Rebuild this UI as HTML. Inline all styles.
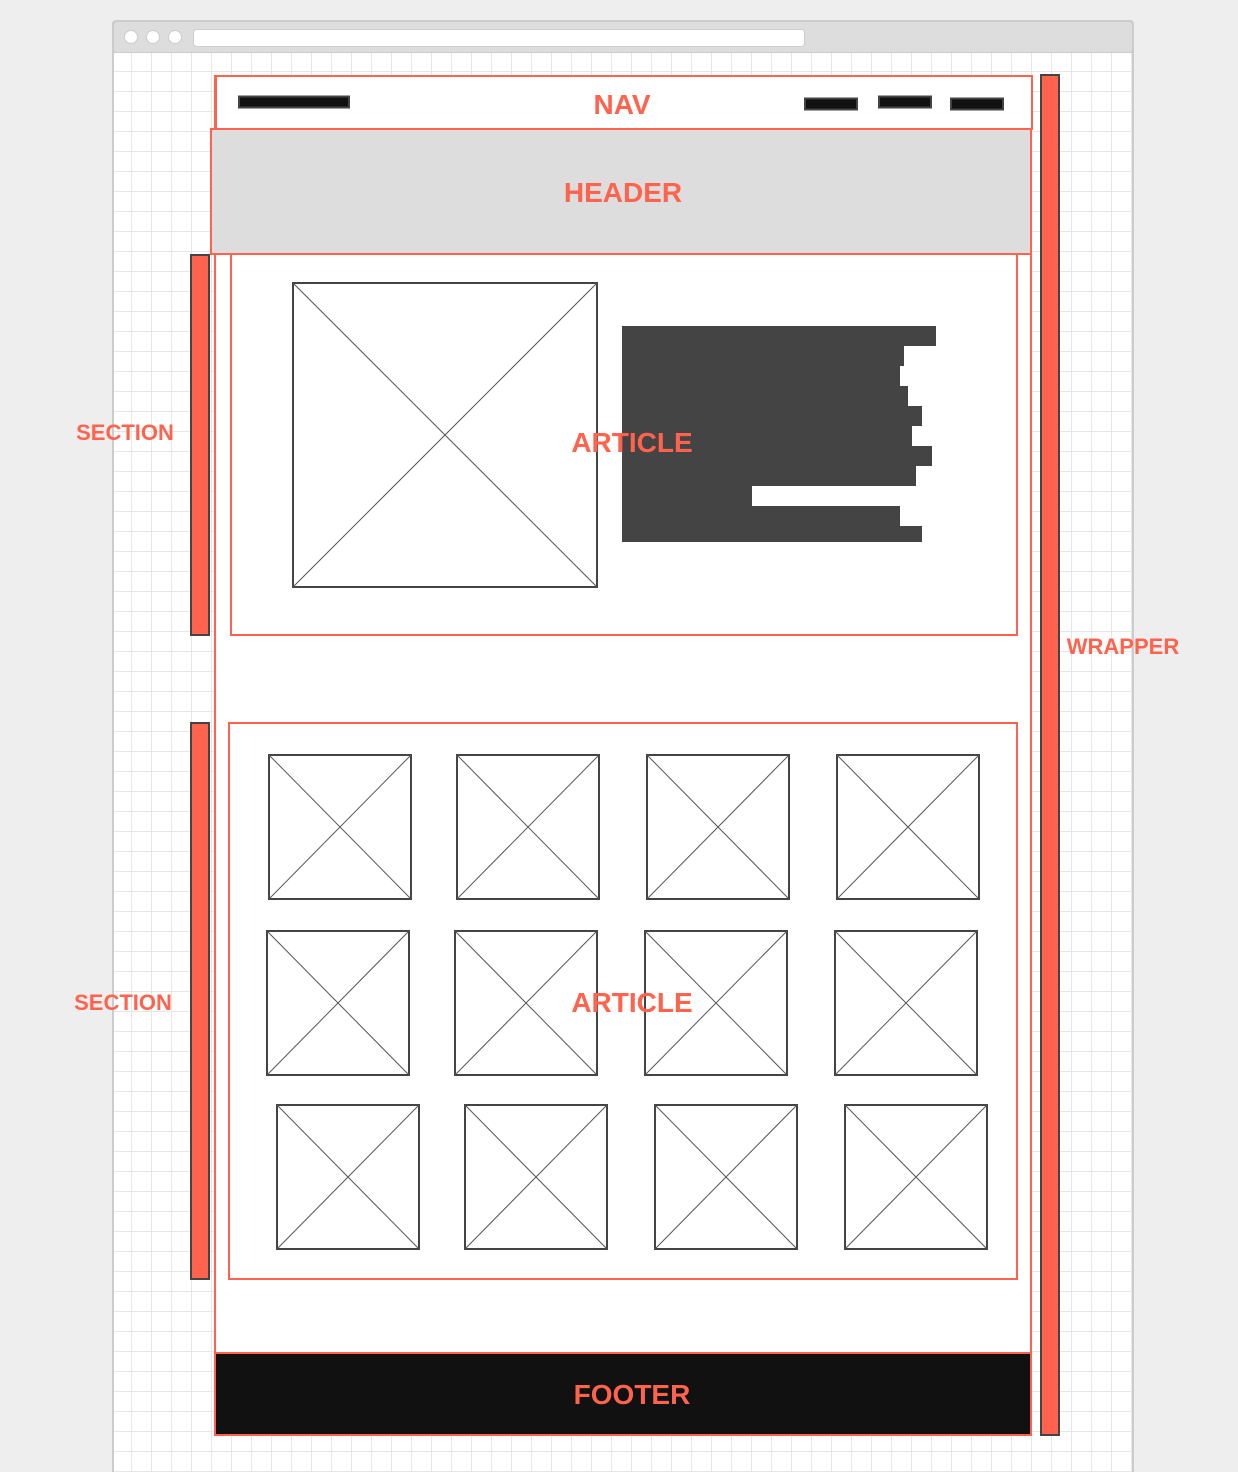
<!DOCTYPE html>
<html><head><meta charset="utf-8"><style>
html,body{margin:0;padding:0;background:#eeeeee;}
svg{display:block}
text{font-family:"Liberation Sans",Arial,sans-serif;font-weight:bold;fill:#ff634d}
</style></head><body>
<svg width="1238" height="1472" viewBox="0 0 1238 1472" xmlns="http://www.w3.org/2000/svg">
<defs>
<pattern id="g" x="11" y="11" width="20" height="20" patternUnits="userSpaceOnUse">
<path d="M0 0.5H20M0.5 0V20" stroke="#e6e6e6" stroke-width="1" fill="none"/>
</pattern>
</defs>
<rect width="1238" height="1472" fill="#eeeeee"/>
<rect x="112" y="20" width="1022" height="1460" rx="4" fill="#cccccc"/>
<rect x="114" y="22" width="1018" height="30" rx="3" fill="#dddddd"/>
<rect x="114" y="53" width="1018" height="1420" fill="#ffffff"/>
<rect x="114" y="53" width="1018" height="1420" fill="url(#g)"/>
<circle cx="131" cy="37" r="6.5" fill="#fff" stroke="#ccc"/>
<circle cx="153" cy="37" r="6.5" fill="#fff" stroke="#ccc"/>
<circle cx="175" cy="37" r="6.5" fill="#fff" stroke="#ccc"/>
<rect x="193.5" y="29.5" width="611" height="17" rx="3" fill="#fff" stroke="#ccc"/>
<g shape-rendering="crispEdges">
<rect x="215" y="76" width="816" height="1359" fill="#fff" stroke="#ff634d" stroke-width="2"/>
<rect x="216" y="76" width="816" height="53" fill="#fff" stroke="#ff634d" stroke-width="2"/>
<rect x="239" y="96.5" width="110" height="11" fill="#111" stroke="#444" stroke-width="2"/>
<rect x="805" y="98.5" width="52" height="11" fill="#111" stroke="#444" stroke-width="2"/>
<rect x="879" y="96.5" width="52" height="11" fill="#111" stroke="#444" stroke-width="2"/>
<rect x="951" y="98.5" width="52" height="11" fill="#111" stroke="#444" stroke-width="2"/>
<rect x="211" y="129" width="820" height="125" fill="#dddddd" stroke="#ff634d" stroke-width="2"/>
<rect x="231" y="254" width="786" height="381" fill="none" stroke="#ff634d" stroke-width="2"/>
<rect x="293" y="283" width="304" height="304" fill="#fff" stroke="#444" stroke-width="2"/>
<path d="M293 283L597 587M597 283L293 587" stroke="#555" stroke-width="1" shape-rendering="auto"/>
<g fill="#444">
<rect x="622" y="326" width="314" height="20"/>
<rect x="622" y="346" width="282" height="20"/>
<rect x="622" y="366" width="278" height="20"/>
<rect x="622" y="386" width="286" height="20"/>
<rect x="622" y="406" width="300" height="20"/>
<rect x="622" y="426" width="290" height="20"/>
<rect x="622" y="446" width="310" height="20"/>
<rect x="622" y="466" width="294" height="20"/>
<rect x="622" y="486" width="130" height="20"/>
<rect x="622" y="506" width="278" height="20"/>
<rect x="622" y="526" width="300" height="16"/>
</g>
<rect x="229" y="723" width="788" height="556" fill="none" stroke="#ff634d" stroke-width="2"/>
<rect x="215" y="1353" width="816" height="82" fill="#111" stroke="#ff634d" stroke-width="2"/>
<rect x="191" y="255" width="18" height="380" fill="#ff634d" stroke="#444" stroke-width="2"/>
<rect x="191" y="723" width="18" height="556" fill="#ff634d" stroke="#444" stroke-width="2"/>
<rect x="1041" y="75" width="18" height="1360" fill="#ff634d" stroke="#444" stroke-width="2"/>
</g>
<g fill="#fff" stroke="#444" stroke-width="2">
<rect x="269" y="755" width="142" height="144"/>
<rect x="457" y="755" width="142" height="144"/>
<rect x="647" y="755" width="142" height="144"/>
<rect x="837" y="755" width="142" height="144"/>
<rect x="267" y="931" width="142" height="144"/>
<rect x="455" y="931" width="142" height="144"/>
<rect x="645" y="931" width="142" height="144"/>
<rect x="835" y="931" width="142" height="144"/>
<rect x="277" y="1105" width="142" height="144"/>
<rect x="465" y="1105" width="142" height="144"/>
<rect x="655" y="1105" width="142" height="144"/>
<rect x="845" y="1105" width="142" height="144"/>
</g>
<g stroke="#555" stroke-width="1" fill="none">
<path d="M269 755l142 144M411 755l-142 144"/>
<path d="M457 755l142 144M599 755l-142 144"/>
<path d="M647 755l142 144M789 755l-142 144"/>
<path d="M837 755l142 144M979 755l-142 144"/>
<path d="M267 931l142 144M409 931l-142 144"/>
<path d="M455 931l142 144M597 931l-142 144"/>
<path d="M645 931l142 144M787 931l-142 144"/>
<path d="M835 931l142 144M977 931l-142 144"/>
<path d="M277 1105l142 144M419 1105l-142 144"/>
<path d="M465 1105l142 144M607 1105l-142 144"/>
<path d="M655 1105l142 144M797 1105l-142 144"/>
<path d="M845 1105l142 144M987 1105l-142 144"/>
</g>
<text x="622" y="114" font-size="28" text-anchor="middle">NAV</text>
<text x="623" y="202" font-size="28" text-anchor="middle">HEADER</text>
<text x="632" y="452" font-size="28" text-anchor="middle">ARTICLE</text>
<text x="632" y="1012" font-size="28" text-anchor="middle">ARTICLE</text>
<text x="632" y="1404" font-size="28" text-anchor="middle">FOOTER</text>
<text x="125" y="440" font-size="22" text-anchor="middle">SECTION</text>
<text x="123" y="1010" font-size="22" text-anchor="middle">SECTION</text>
<text x="1123" y="654" font-size="22" text-anchor="middle">WRAPPER</text>
</svg>
</body></html>
